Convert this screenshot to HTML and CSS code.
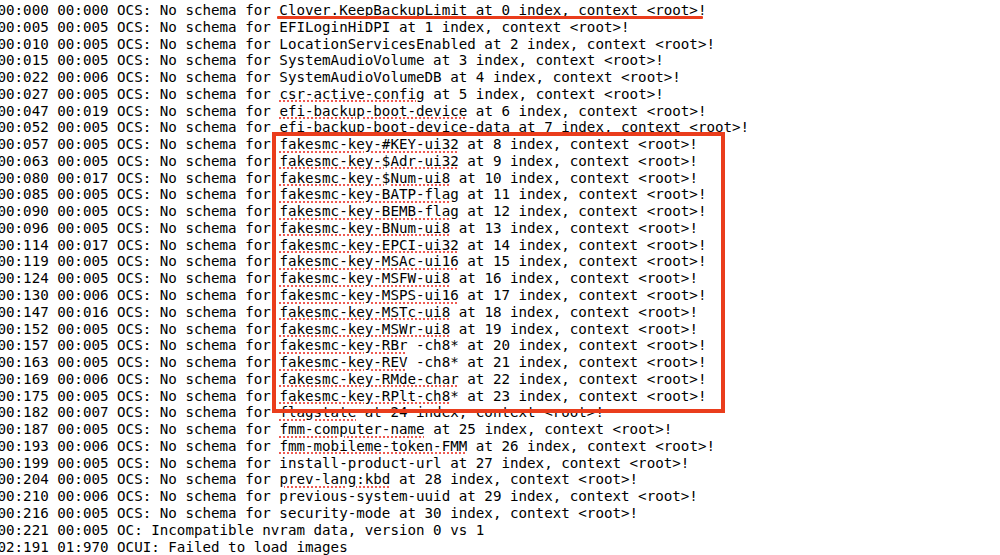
FILE: index.html
```html
<!DOCTYPE html>
<html lang="en">
<head>
<meta charset="utf-8">
<title>OpenCore log</title>
<link rel="stylesheet" href="styles.css">
</head>
<body>
<div class="page">
<div class="log">
<div class="ln">00:000 00:000 OCS: No schema for Clover.KeepBackupLimit at 0 index, context &lt;root&gt;!</div>
<div class="ln">00:005 00:005 OCS: No schema for EFILoginHiDPI at 1 index, context &lt;root&gt;!</div>
<div class="ln">00:010 00:005 OCS: No schema for LocationServicesEnabled at 2 index, context &lt;root&gt;!</div>
<div class="ln">00:015 00:005 OCS: No schema for SystemAudioVolume at 3 index, context &lt;root&gt;!</div>
<div class="ln">00:022 00:006 OCS: No schema for SystemAudioVolumeDB at 4 index, context &lt;root&gt;!</div>
<div class="ln">00:027 00:005 OCS: No schema for <span class="sp">csr-active-config</span> at 5 index, context &lt;root&gt;!</div>
<div class="ln">00:047 00:019 OCS: No schema for <span class="sp">efi-backup-boot-device</span> at 6 index, context &lt;root&gt;!</div>
<div class="ln">00:052 00:005 OCS: No schema for <span class="sp">efi-backup-boot-device-data</span> at 7 index, context &lt;root&gt;!</div>
<div class="ln">00:057 00:005 OCS: No schema for <span class="sp">fakesmc-key-#KEY-ui32</span> at 8 index, context &lt;root&gt;!</div>
<div class="ln">00:063 00:005 OCS: No schema for <span class="sp">fakesmc-key-$Adr-ui32</span> at 9 index, context &lt;root&gt;!</div>
<div class="ln">00:080 00:017 OCS: No schema for <span class="sp">fakesmc-key-$Num-ui8</span> at 10 index, context &lt;root&gt;!</div>
<div class="ln">00:085 00:005 OCS: No schema for <span class="sp">fakesmc-key-BATP-flag</span> at 11 index, context &lt;root&gt;!</div>
<div class="ln">00:090 00:005 OCS: No schema for <span class="sp">fakesmc-key-BEMB-flag</span> at 12 index, context &lt;root&gt;!</div>
<div class="ln">00:096 00:005 OCS: No schema for <span class="sp">fakesmc-key-BNum-ui8</span> at 13 index, context &lt;root&gt;!</div>
<div class="ln">00:114 00:017 OCS: No schema for <span class="sp">fakesmc-key-EPCI-ui32</span> at 14 index, context &lt;root&gt;!</div>
<div class="ln">00:119 00:005 OCS: No schema for <span class="sp">fakesmc-key-MSAc-ui16</span> at 15 index, context &lt;root&gt;!</div>
<div class="ln">00:124 00:005 OCS: No schema for <span class="sp">fakesmc-key-MSFW-ui8</span> at 16 index, context &lt;root&gt;!</div>
<div class="ln">00:130 00:006 OCS: No schema for <span class="sp">fakesmc-key-MSPS-ui16</span> at 17 index, context &lt;root&gt;!</div>
<div class="ln">00:147 00:016 OCS: No schema for <span class="sp">fakesmc-key-MSTc-ui8</span> at 18 index, context &lt;root&gt;!</div>
<div class="ln">00:152 00:005 OCS: No schema for <span class="sp">fakesmc-key-MSWr-ui8</span> at 19 index, context &lt;root&gt;!</div>
<div class="ln">00:157 00:005 OCS: No schema for <span class="sp">fakesmc-key-RBr</span> -ch8* at 20 index, context &lt;root&gt;!</div>
<div class="ln">00:163 00:005 OCS: No schema for <span class="sp">fakesmc-key-REV</span> -ch8* at 21 index, context &lt;root&gt;!</div>
<div class="ln">00:169 00:006 OCS: No schema for <span class="sp">fakesmc-key-RMde-char</span> at 22 index, context &lt;root&gt;!</div>
<div class="ln">00:175 00:005 OCS: No schema for <span class="sp">fakesmc-key-RPlt-ch8</span>* at 23 index, context &lt;root&gt;!</div>
<div class="ln">00:182 00:007 OCS: No schema for <span class="sp">flagstate</span> at 24 index, context &lt;root&gt;!</div>
<div class="ln">00:187 00:005 OCS: No schema for <span class="sp">fmm-computer-name</span> at 25 index, context &lt;root&gt;!</div>
<div class="ln">00:193 00:006 OCS: No schema for <span class="sp">fmm-mobileme-token-FMM</span> at 26 index, context &lt;root&gt;!</div>
<div class="ln">00:199 00:005 OCS: No schema for install-product-url at 27 index, context &lt;root&gt;!</div>
<div class="ln">00:204 00:005 OCS: No schema for <span class="sp">prev-lang:kbd</span> at 28 index, context &lt;root&gt;!</div>
<div class="ln">00:210 00:006 OCS: No schema for previous-system-uuid at 29 index, context &lt;root&gt;!</div>
<div class="ln">00:216 00:005 OCS: No schema for security-mode at 30 index, context &lt;root&gt;!</div>
<div class="ln">00:221 00:005 OC: Incompatible nvram data, version 0 vs 1</div>
<div class="ln">02:191 01:970 OCUI: Failed to load images</div>
</div>
<div class="mark-underline"></div>
<div class="mark-box"></div>
</div>
</body>
</html>
```
FILE: styles.css
```css
html, body {
  margin: 0;
  padding: 0;
  background: #ffffff;
}

.page {
  position: relative;
  width: 1000px;
  height: 555px;
  overflow: hidden;
}

.log {
  margin-left: -2.5px;
  padding-top: 2px;
  font-family: "DejaVu Sans Mono", "Liberation Mono", monospace;
  font-size: 14.2px;
  line-height: 16.77px;
  color: #000000;
}

.ln {
  height: 16.77px;
  white-space: pre;
}

.sp {
  text-decoration-line: underline;
  text-decoration-style: dotted;
  text-decoration-color: #ee5a52;
  text-decoration-thickness: 2px;
  text-underline-offset: 1.5px;
}

.mark-underline {
  position: absolute;
  left: 277px;
  top: 16px;
  width: 426px;
  height: 3px;
  background: #ea3d1c;
  border-radius: 1px;
}

.mark-box {
  position: absolute;
  left: 272px;
  top: 132px;
  width: 445px;
  height: 273px;
  border: 4px solid #ea3d1c;
}
```
